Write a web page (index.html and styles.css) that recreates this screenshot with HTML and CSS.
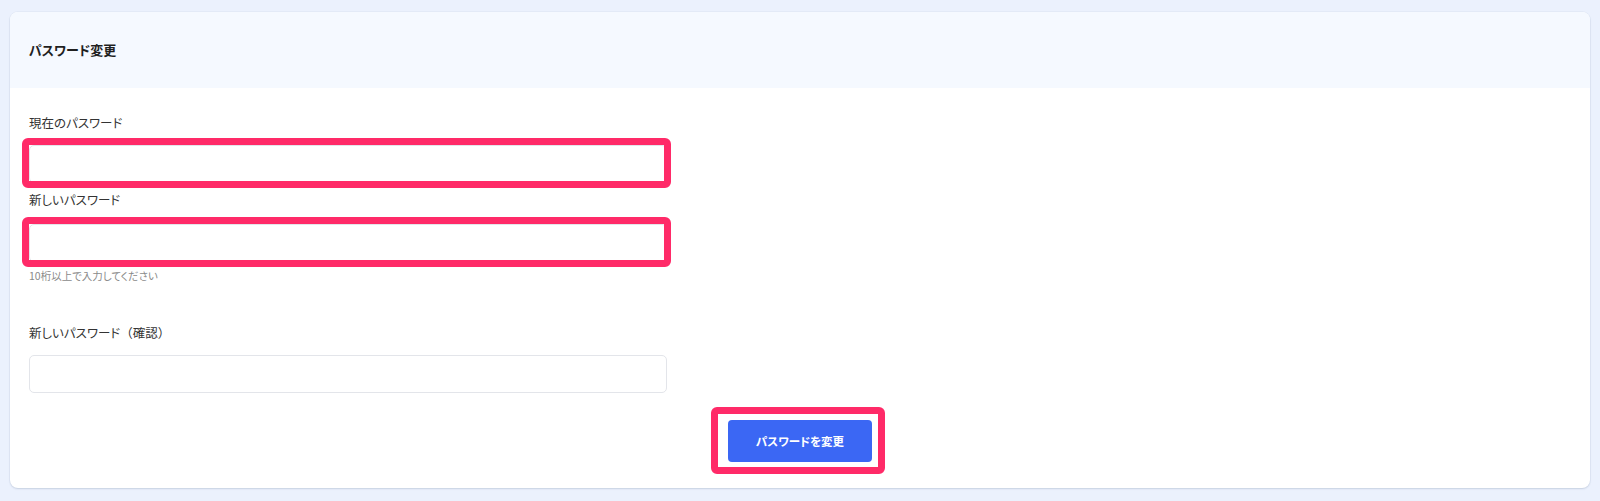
FILE: index.html
```html
<!DOCTYPE html>
<html lang="ja">
<head>
<meta charset="utf-8">
<title>パスワード変更</title>
<link rel="stylesheet" href="styles.css">
</head>
<body>
  <section class="card">
    <header class="card-header">
      <h2 class="card-title">パスワード変更</h2>
    </header>
    <form class="card-body">
      <div class="field field-1">
        <label class="field-label">現在のパスワード</label>
        <div class="input-wrap">
          <input class="input" type="password">
          <span class="highlight highlight-input"></span>
        </div>
      </div>
      <div class="field field-2">
        <label class="field-label">新しいパスワード</label>
        <div class="input-wrap">
          <input class="input" type="password">
          <span class="highlight highlight-input"></span>
        </div>
        <p class="hint">10桁以上で入力してください</p>
      </div>
      <div class="field field-3">
        <label class="field-label">新しいパスワード<span class="paren">（確認）</span></label>
        <div class="input-wrap">
          <input class="input" type="password">
        </div>
      </div>
      <div class="actions">
        <div class="btn-wrap">
          <button class="btn" type="button">パスワードを変更</button>
          <span class="highlight highlight-btn"></span>
        </div>
      </div>
    </form>
  </section>
</body>
</html>
```

FILE: styles.css
```css
* { box-sizing: border-box; }

html, body {
  margin: 0;
  padding: 0;
}

body {
  background: #ebf1fd;
  padding: 12px 10px 13px 10px;
  font-family: "Noto Sans CJK JP", "Noto Sans", sans-serif;
  font-feature-settings: "palt";
  color: #222;
}

.card {
  background: #fff;
  border-radius: 8px;
  box-shadow: 0 1px 2px rgba(30, 50, 90, 0.14), 0 0 0 1px rgba(30, 50, 90, 0.03);
}

.card-header {
  height: 76px;
  background: #f5f9ff;
  border-radius: 8px 8px 0 0;
  display: flex;
  align-items: center;
  padding: 0 19px;
}

.card-title {
  margin: 0;
  font-size: 13px;
  font-weight: 700;
  line-height: 20px;
  color: #1f1f1f;
}

.card-body {
  padding: 25px 19px 26px 19px;
  margin: 0;
}

.field {
  display: flex;
  flex-direction: column;
}

.field-2 { margin-top: 7px; }
.field-3 { margin-top: 39px; }

.field-label {
  font-size: 12.5px;
  line-height: 20px;
  color: #333;
  margin-bottom: 12px;
}

.field-2 .field-label { margin-bottom: 14px; }

.paren {
  font-feature-settings: normal;
}

.input-wrap {
  position: relative;
  width: 638px;
}

.input {
  display: block;
  width: 638px;
  height: 38px;
  border: 1px solid #e3e5ea;
  border-radius: 5px;
  background: #fff;
  outline: none;
  padding: 0 12px;
  font: inherit;
}

.hint {
  margin: 6px 0 0 0;
  font-size: 10.5px;
  line-height: 16px;
  color: #8a8a8a;
}

.actions {
  display: flex;
  justify-content: center;
  margin-top: 27px;
}

.btn-wrap {
  position: relative;
}

.btn {
  display: block;
  height: 42px;
  width: 144px;
  border: none;
  border-radius: 4px;
  background: #3b67f4;
  color: #fff;
  font: inherit;
  font-size: 11.5px;
  font-weight: 700;
  line-height: 42px;
  padding: 0;
}

.highlight {
  position: absolute;
  border: 7px solid #ff2a68;
  border-radius: 6px;
  pointer-events: none;
}

.highlight-input {
  left: -7px;
  right: -4px;
  top: -7px;
  bottom: -5px;
}

.highlight-btn {
  left: -17px;
  right: -13px;
  top: -13px;
  bottom: -12px;
}
```
